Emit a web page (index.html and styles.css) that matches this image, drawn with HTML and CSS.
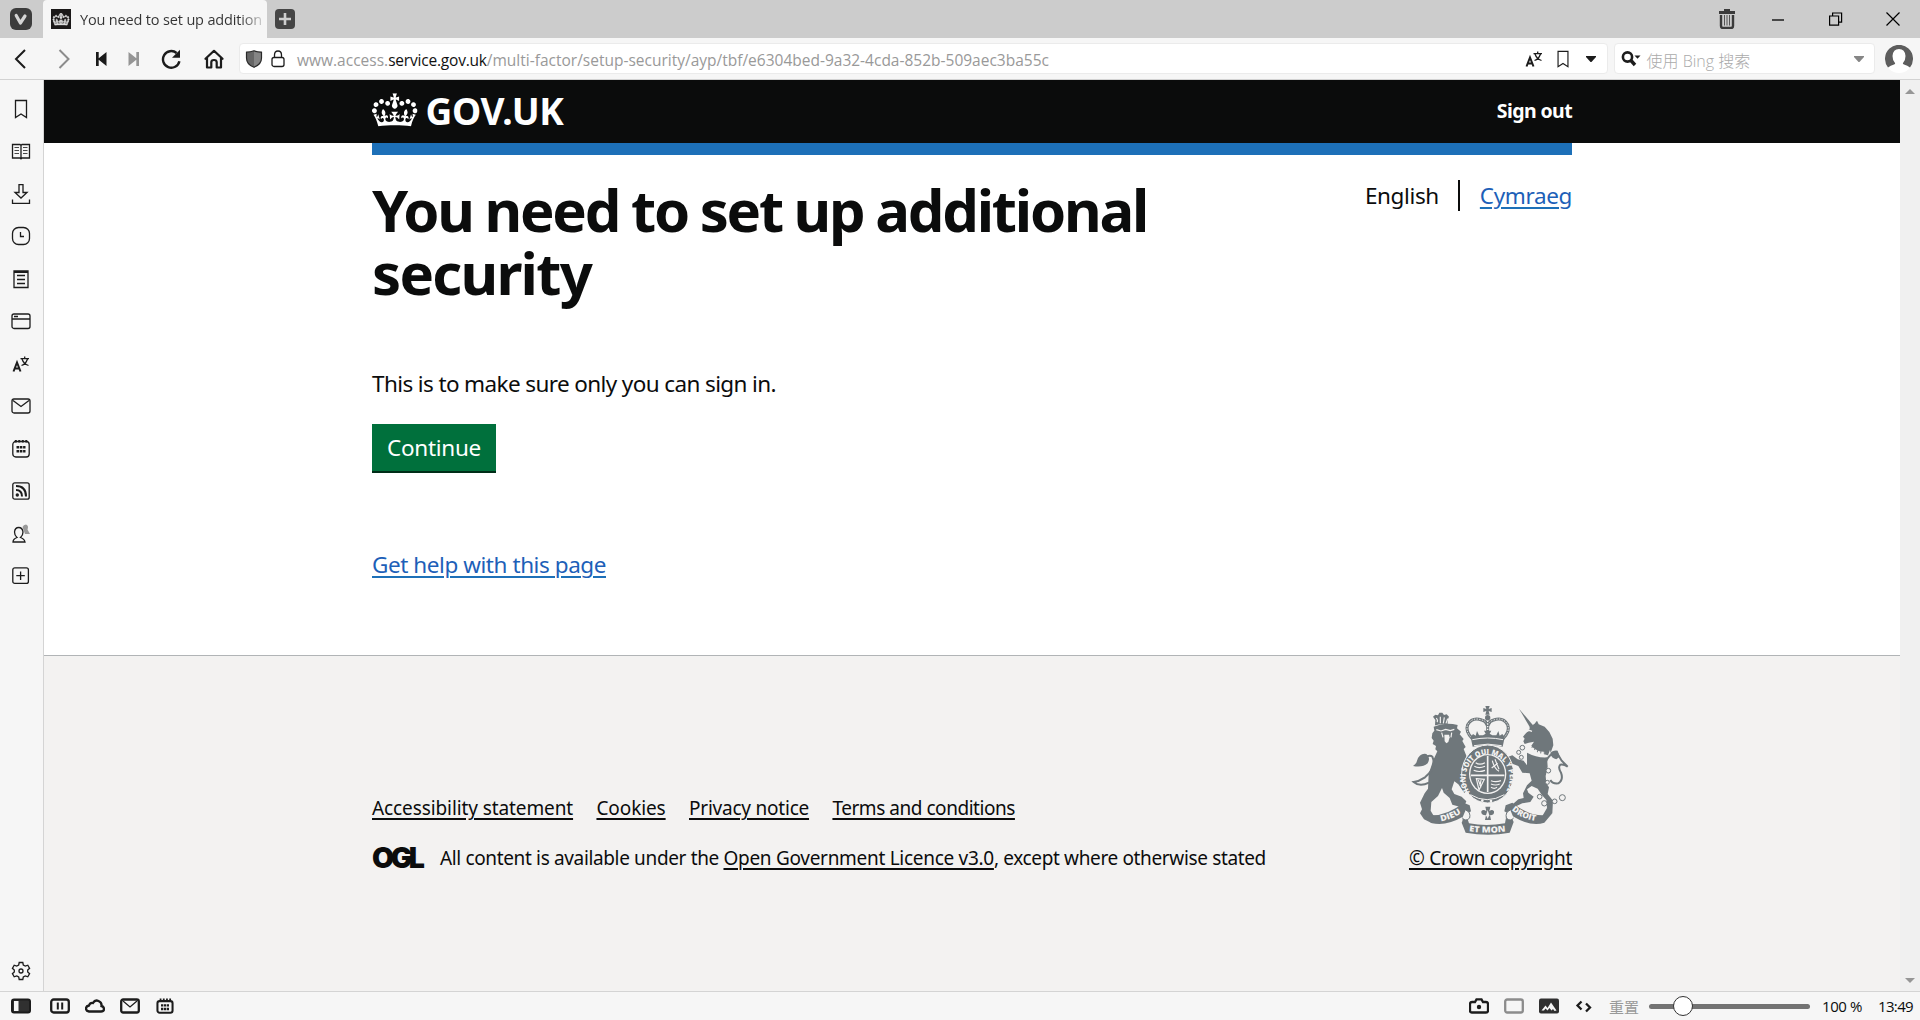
FILE: index.html
```html
<!DOCTYPE html>
<html lang="en">
<head>
<meta charset="utf-8">
<title>You need to set up additional security</title>
<link rel="stylesheet" href="styles.css">
</head>
<body>
<svg class="defs" width="0" height="0" aria-hidden="true">
  <symbol id="crown" viewBox="0 0 132 97"><path d="M25 30.2c3.500 1.500 7.700-.2 9.100-3.700 1.500-3.600-.2-7.800-3.900-9.200-3.600-1.400-7.600.3-9.100 3.900-1.400 3.500.3 7.500 3.900 9zM9 39.500c3.600 1.500 7.800-.2 9.200-3.700 1.500-3.600-.2-7.800-3.900-9.100-3.600-1.500-7.600.2-9.100 3.800-1.400 3.500.3 7.500 3.800 9zM4.400 57.200c3.500 1.500 7.700-.2 9.100-3.800 1.500-3.600-.2-7.700-3.900-9.100-3.500-1.500-7.600.3-9.100 3.800-1.400 3.500.3 7.600 3.900 9.100zm38.300-21.400c3.500 1.500 7.700-.2 9.100-3.800 1.500-3.600-.2-7.700-3.900-9.100-3.600-1.500-7.600.3-9.100 3.800-1.300 3.600.4 7.700 3.900 9.100zm64.400-5.600c-3.600 1.500-7.800-.2-9.100-3.700-1.500-3.600.2-7.800 3.800-9.200 3.600-1.400 7.700.3 9.200 3.900 1.300 3.500-.4 7.500-3.900 9zm15.900 9.300c-3.600 1.500-7.700-.2-9.100-3.700-1.500-3.600.2-7.800 3.700-9.100 3.600-1.500 7.700.2 9.200 3.800 1.500 3.500-.3 7.500-3.800 9zm4.700 17.700c-3.600 1.500-7.800-.2-9.200-3.800-1.500-3.600.2-7.700 3.900-9.100 3.600-1.500 7.700.3 9.200 3.800 1.300 3.500-.4 7.600-3.900 9.100zM89.300 35.800c-3.600 1.500-7.800-.2-9.200-3.800-1.400-3.600.2-7.700 3.900-9.100 3.600-1.500 7.700.3 9.200 3.800 1.400 3.600-.3 7.700-3.900 9.100zM69.700 17.700l8.900 4.700V9.300l-8.900 2.800c-.2-.3-.5-.6-.9-.9L72.400 0H59.600l3.500 11.200c-.3.3-.6.5-.9.9l-8.800-2.800v13.100l8.800-4.700c.3.3.6.7.9.9l-5 15.400v.1c-.2.8-.4 1.600-.4 2.400 0 4.100 3.100 7.500 7 8.100h.2c.3 0 .7.1 1 .1.4 0 .7 0 1-.1h.2c4-.6 7.100-4.100 7.100-8.100 0-.8-.1-1.700-.4-2.400V34l-5.100-15.400c.4-.2.7-.6 1-.9zM66 92.800c16.900 0 32.800 1.100 47.100 3.200 4-16.900 8.900-26.700 14-33.500l-9.600-3.400c1 4.900 1.100 7.200 0 10.200-1.500-1.400-3-4.300-4.200-8.700L108.600 76c2.800-2 5-3.200 7.500-3.300-4.400 9.400-10 11.900-13.600 11.200-4.300-.8-6.300-4.600-5.600-7.900 1-4.700 5.700-5.900 8-.5 4.300-8.700-3-11.400-7.600-8.800 7.100-7.200 7.900-13.500 2.100-21.100-8 6.100-8.100 12.300-4.500 20.800-4.700-5.400-12.100-2.500-9.500 6.200 3.400-5.200 7.900-2 7.200 3.100-.6 4.300-6.400 7.800-13.500 7.200-10.300-.9-10.900-8-11.200-13.800 2.500-.5 7.100 1.800 11 7.300L80.200 60c-4.100 4.400-8 5.300-12.300 5.400 1.400-4.400 8-11.600 8-11.600H55.500s6.400 7.200 7.900 11.600c-4.200-.1-8-1-12.300-5.400l1.400 16.400c3.900-5.500 8.500-7.700 10.900-7.300-.3 5.800-.9 12.800-11.100 13.800-7.200.6-12.900-2.900-13.500-7.200-.7-5 3.800-8.300 7.100-3.100 2.700-8.700-4.600-11.600-9.400-6.200 3.700-8.500 3.600-14.700-4.600-20.800-5.800 7.600-5 13.900 2.200 21.100-4.700-2.600-11.900.1-7.700 8.800 2.300-5.500 7.100-4.200 8.100.5.700 3.300-1.300 7.100-5.700 7.900-3.500.7-9-1.800-13.500-11.200 2.500.1 4.700 1.300 7.500 3.300l-4.700-15.400c-1.200 4.400-2.700 7.200-4.300 8.700-1.100-3-.9-5.300 0-10.200l-9.500 3.400c5 6.900 9.900 16.700 14 33.500 14.800-2.100 30.800-3.200 47.700-3.200z"/></symbol>
  <symbol id="bookmark" viewBox="0 0 20 20"><path d="M4.500 1.500h11v17L10 15l-5.500 3.500z" class="line"/></symbol>
  <symbol id="translate" viewBox="0 0 20 20"><path d="M2.500 17.500L6 8.500l3.500 9M3.800 14.500h4.400" class="line heavy"/><path d="M9.500 4.700h8.500M13.700 2.500v2M11 5c1 3 3.500 5.500 6.500 6.500M16.500 5c-1 3-3 5.500-6 6.500" class="line"/></symbol>
  <symbol id="mail" viewBox="0 0 20 20"><rect x="1" y="3" width="18" height="14" rx="2" class="line"/><path d="M2 4.500l8 6 8-6" class="line"/></symbol>
  <symbol id="calendar" viewBox="0 0 20 20"><rect x="1.800" y="2.500" width="16.400" height="15.500" rx="3" class="line"/><path d="M3.800 2.300h13" stroke="#1c1c1c" stroke-width="2.400" stroke-dasharray="2 1.500"/><path d="M5.500 8.300h9M5.500 12.300h9" stroke="#1c1c1c" stroke-width="2.600" stroke-dasharray="2.600 .7"/></symbol>
</svg>

<header class="tabbar">
  <div class="menu-slot"><svg class="ic22" viewBox="0 0 22 22"><rect width="22" height="22" rx="6" fill="#3c3c3c"/><path d="M6.200 7.500L10.400 15l4.600-7" fill="none" stroke="#d4d4d4" stroke-width="3.200" stroke-linecap="round" stroke-linejoin="round"/></svg></div>
  <div class="tab">
    <svg class="ic20" viewBox="0 0 20 20"><rect width="20" height="20" fill="#1b1919"/><use href="#crown" x="1.500" y="4" width="17" height="12.500" fill="#e2e2e2" stroke="#d6d6d6" stroke-width="5"/></svg>
    <span class="tab-title">You need to set up addition</span>
  </div>
  <svg class="newtab ic20" viewBox="0 0 20 20"><rect width="20" height="20" rx="4" fill="#454545"/><path d="M10 4v12M4 10h12" stroke="#cecece" stroke-width="2.600"/></svg>
  <div class="window-controls">
    <svg class="ic20 trash" viewBox="0 0 20 20"><path d="M2 3.500h16M7 1.500h6" stroke="#3b3b3b" stroke-width="2.800" fill="none"/><path d="M4 6v11q0 2 2 2h8q2 0 2-2V6" fill="none" stroke="#3b3b3b" stroke-width="2.400"/><path d="M7.500 6v10.500M10 6v10.500M12.500 6v10.500" stroke="#555" stroke-width="1"/></svg>
    <svg class="ic14" viewBox="0 0 14 14"><path d="M1 8h12" stroke="#000" stroke-width="1.300"/></svg>
    <svg class="ic14" viewBox="0 0 14 14"><path d="M.6 4h9v9.200h-9zM3.600 4V1h9v9.200h-3" fill="none" stroke="#000" stroke-width="1.200"/></svg>
    <svg class="ic14" viewBox="0 0 14 14"><path d="M.5.500l13 13m0-13l-13 13" stroke="#000" stroke-width="1.200"/></svg>
  </div>
</header>

<nav class="toolbar">
  <div class="nav-icons">
    <svg viewBox="0 0 20 20"><path d="M14 1L5 10l9 9" class="line heavy"/></svg>
    <svg viewBox="0 0 20 20"><path d="M5.500 1l9 9-9 9" class="line heavy grey"/></svg>
    <svg viewBox="0 0 20 20"><path d="M5 3v14h2.700v-6.200l7.800 6.200V3L7.700 9.200V3z" fill="#1a1a1a"/></svg>
    <svg viewBox="0 0 20 20"><path d="M15 3v14h-2.700v-6.200L4.500 17V3l7.800 6.200V3z" fill="#959595"/></svg>
    <svg viewBox="0 0 20 20"><path d="M18.400 12.200A8.300 8.300 0 1 1 15.600 4" fill="none" stroke="#1c1c1c" stroke-width="2.400"/><path d="M19 .8v8h-8z" fill="#1c1c1c"/></svg>
    <svg viewBox="0 0 20 20"><path d="M1.500 9.800L10 1.800l8.500 8M3 9v9.500h4.300v-5.200q0-2.300 2.700-2.300t2.700 2.300v5.200H17V9" fill="none" stroke="#1c1c1c" stroke-width="2.200" stroke-linejoin="round" stroke-linecap="round"/></svg>
  </div>
  <div class="address">
    <svg class="shield" viewBox="0 0 18 18"><path d="M1.500 2.200Q5.500 2 9 .8q3.500 1.200 7.500 1.400V8q0 6.500-7.500 9.300Q1.500 14.500 1.500 8z" fill="#666" stroke="#292929" stroke-width="1.200"/><path d="M9 1.800v14.500Q15.500 13.500 15.700 8V3Q12 2.800 9 1.800z" fill="#858585"/></svg>
    <svg class="lock" viewBox="0 0 14 18"><rect x="1" y="7.500" width="12" height="9" rx="2" class="line"/><path d="M3.500 7.500V5q0-4 3.500-4t3.500 4v2.500" class="line"/></svg>
    <span class="url">www.access.<b>service.gov.uk</b>/multi-factor/setup-security/ayp/tbf/e6304bed-9a32-4cda-852b-509aec3ba55c</span>
    <svg class="address-translate" viewBox="0 0 20 20"><use href="#translate"/></svg>
    <svg class="address-bookmark" viewBox="0 0 20 20"><use href="#bookmark"/></svg>
    <svg class="caret" viewBox="0 0 10 6"><path d="M0 0h10v1L5 6.500 0 1z" fill="#1c1c1c"/></svg>
  </div>
  <div class="search">
    <svg class="glass" viewBox="0 0 20 16"><circle cx="6.500" cy="6" r="4.600" fill="none" stroke="#1c1c1c" stroke-width="2.600"/><path d="M9.500 9l4.500 5" stroke="#1c1c1c" stroke-width="3.400"/><path d="M13.500 4.500h6l-3 3.300z" fill="#1c1c1c"/></svg>
    <span class="placeholder">使用 Bing 搜索</span>
    <svg class="caret" viewBox="0 0 10 6"><path d="M0 0h10v1L5 6.500 0 1z" fill="#868686"/></svg>
  </div>
  <svg class="avatar" viewBox="0 0 28 28"><circle cx="14" cy="14" r="14" fill="#fff"/><path d="M3 22.500a14 14 0 1 1 22 0q-2.500-2.200-6-3-1.500-.6-1-1.500Q20.500 15.500 20.500 11q-.5-7-6.500-7t-6.500 7q0 4.500 2.500 7 .5.900-1 1.500-3.500.8-6 3z" fill="#5d5d5d"/></svg>
</nav>

<div class="main">
  <aside class="sidebar">
    <div class="panels">
      <svg viewBox="0 0 20 20"><use href="#bookmark"/></svg>
      <svg viewBox="0 0 20 20"><path d="M1.500 3.500H9l1 .8 1-.8h7.500V17H11l-1 .8-1-.8H1.500zM10 4.500v13" class="line"/><path d="M3.500 6.500H8M3.500 9.500H8M3.500 12.500H8M12 6.500h4.500M12 9.500h4.500M12 12.500h4.500" class="line thin"/></svg>
      <svg viewBox="0 0 20 20"><path d="M1.500 15.500v4h17v-4M8 .5h4v8h4l-6 5.500-6-5.500h4z" class="line"/></svg>
      <svg viewBox="0 0 20 20"><rect x="1.500" y="1.500" width="17" height="17" rx="6" class="line"/><path d="M9.500 6v4.500H13" class="line"/></svg>
      <svg viewBox="0 0 20 20"><path d="M3 2h14v16.500H3z" class="line"/><path d="M3 3h14" class="line heavy"/><path d="M6 6.500h8M6 10.500h8M6 14.500h8" class="line"/></svg>
      <svg viewBox="0 0 20 20"><rect x="1" y="3" width="18" height="14.500" rx="2" class="line"/><path d="M1 8h18M3 5.500h4" class="line"/></svg>
      <svg viewBox="0 0 20 20"><use href="#translate"/></svg>
      <svg viewBox="0 0 20 20"><use href="#mail"/></svg>
      <svg viewBox="0 0 20 20"><use href="#calendar"/></svg>
      <svg viewBox="0 0 20 20"><rect x="1.800" y="1.800" width="16.400" height="16.400" rx="2" class="line"/><circle cx="6.300" cy="14" r="1.700" fill="#1c1c1c"/><path d="M5 9q6 0 6 6.500M5 5q10 0 10 10.500" class="line heavy"/></svg>
      <svg viewBox="0 0 20 20"><path d="M11.500 3q1-2.500 3.500-2.500 3 1 1.500 5l2.500 4.500h-5z" fill="#999"/><path d="M2 18q0-3 4-4.500Q3.500 11.500 3.500 8q.5-4.500 4.200-4.500T12 8q0 3.500-2.500 5.500 4 1.500 4.500 4.500z" class="line"/></svg>
      <svg viewBox="0 0 20 20"><rect x="1.800" y="1.800" width="15.600" height="15.600" rx="2" class="line"/><path d="M9.600 5.500v8.500M5.300 9.700h8.500" class="line"/></svg>
    </div>
    <svg viewBox="0 0 20 20"><path d="M8.200 1.500h3.600l.5 2.500 2 1.100 2.500-.9 1.800 3.100-1.900 1.700v2l1.900 1.700-1.800 3.100-2.500-.9-2 1.100-.5 2.500H8.200L7.700 16l-2-1.100-2.500.9-1.800-3.100L3.300 11V9L1.400 7.300l1.800-3.100 2.500.9 2-1.100z" class="line"/><circle cx="10" cy="10" r="2" class="line"/></svg>
  </aside>

  <div class="page">
    <div class="gov-header"><div class="wrap gov-header-row">
      <a class="logo"><svg class="logo-crown" viewBox="0 0 132 97"><use href="#crown" fill="#fff"/></svg><span>GOV.UK</span></a>
      <a class="signout">Sign out</a>
    </div></div>
    <main class="wrap content">
      <div class="blue-bar"></div>
      <div class="top-row">
        <h1>You need to set up additional<br><span class="second-line">security</span></h1>
        <div class="langs"><span class="lang-current">English</span><a class="link">Cymraeg</a></div>
      </div>
      <p class="lead">This is to make sure only you can sign in.</p>
      <button class="button">Continue</button>
      <p class="help"><a class="link">Get help with this page</a></p>
    </main>
    <footer class="gov-footer"><div class="wrap footer-row">
      <div class="footer-meta">
        <ul class="footer-links">
          <li><a class="t1">Accessibility statement</a></li><li><a class="t1">Cookies</a></li><li><a class="t2">Privacy notice</a></li><li><a class="t3">Terms and conditions</a></li>
        </ul>
        <div class="licence"><span class="ogl">OGL</span><span class="licence-text">All content is available under the <a>Open Government Licence v3.0</a>, except where otherwise stated</span></div>
      </div>
      <div class="copyright">
        <svg class="crest" viewBox="0 0 510 420">
          <defs>
            <path id="garter" d="M195 277A66 71 0 1 1 301 277"/>
            <path id="dieu" d="M108 364Q145 357 174 336"/>
            <path id="droit" d="M320 330Q350 358 398 364"/>
            <path id="etmon" d="M192 394Q248 402 308 394"/>
          </defs>
          <g fill="#6f777b">
            <!-- lion -->
            <path d="M90 76L91 60 84 50l7-6 8 2 4-8 9 0 5 7 8-2 7 7-4 9 0 17q-20-6-35 0z"/>
            <path d="M86 80q34-14 72-5l-2 10 12 10-4 8 12 14-4 6 10 18-6 6 8 20-4 24-9 16 18 42-2 20-9 10-18-26-12-9-8 24 8 14 22 8 14 14-6 14-14 2-22-6-8-20-18-16-5-14-12 24-20 18-2 26 8 14 18 10-4 12-18 2-24-12-12-18 6-12-6-20 14-28 10-14 2-44 14-42 12-26-6-6 2-10-10-6 3-10-6-8 2-14 6-8z"/>
            <path d="M36 182q8-24 28-20 14 10 4 28-16 14-44 8 10-6 12-16z"/>
          </g>
          <path d="M40 194q30-36 42-24 14 32-22 62-18 12-34 14 18 16 46 2" fill="none" stroke="#6f777b" stroke-width="6"/>
          <path d="M94 89l14 4 14-5 14 4 12-4M110 98l4 14M140 98l-2 14M94 54q6 8 2 12M106 50v20M118 52l-3 18M128 56l-5 14" fill="none" stroke="#f3f2f1" stroke-width="3.500"/>
          <path d="M118 104h14l2 8-4 14-6 4-5-6z" fill="#f3f2f1"/>
          <!-- unicorn -->
          <g fill="#6f777b">
            <path d="M342 26l42 50-8 8z"/>
            <path d="M374 80l14-8 8-10 5 11 18 7 14 16 10 20 2 20-8 22-2-8-6 16-30-8-22-18 10-15-16 3-12 4-4-8 4-8-5-6 20-24z"/>
            <path d="M366 158q30 16 60 14l2 28-6 28 2 22 8 12-4 20 16 20-2 38-16 14-14-6 14-24-2-24-14-16-12-18-18-8-14 10 4 10 16 12-10 16-24 4-22 10-6-8 16-14 16-4-2-14 12-24 14-14-6-22-22-2-12-20-26-10-8-16 16-6 16 12 18 4 10 14z"/>
            <path d="M454 178l10-8-6-18q-16-2-22 8 4 16 18 18z"/>
          </g>
          <path d="M372 137q20 25 48 23" fill="none" stroke="#f3f2f1" stroke-width="10" stroke-dasharray="8 3"/>
          <path d="M358 98l14-7 9 3" fill="none" stroke="#f3f2f1" stroke-width="4"/>
          <path d="M422 186q14-32 36-24l12 20 18 18q-12-8-22-6-8 8 2 24 8 22-8 32-18 2-24-10" fill="none" stroke="#6f777b" stroke-width="6"/>
          <g fill="#f3f2f1" stroke="#6f777b" stroke-width="3"><circle cx="352" cy="143" r="7"/><circle cx="341" cy="157" r="6"/><circle cx="349" cy="172" r="6"/><circle cx="430" cy="212" r="7"/><circle cx="427" cy="247" r="6"/><circle cx="404" cy="290" r="7"/><circle cx="418" cy="310" r="8"/><circle cx="449" cy="304" r="7"/><circle cx="472" cy="293" r="9"/></g>
          <!-- royal crown -->
          <path d="M202 116Q180 94 188 74q14-24 42-14 12 2 16 14h4q4-12 16-14 28-10 42 14 8 20-14 42" fill="none" stroke="#6f777b" stroke-width="9"/>
          <path d="M202 116Q180 94 188 74q14-24 42-14 12 2 16 14h4q4-12 16-14 28-10 42 14 8 20-14 42" fill="none" stroke="#f3f2f1" stroke-width="3" stroke-dasharray="4 4"/>
          <path d="M241 18h13l-3 9 9-3v12l-9-3 3 11h-13l3-11-9 3V24l9 3z" fill="#6f777b"/>
          <circle cx="248" cy="53" r="8" fill="#6f777b"/><path d="M248 62v34" stroke="#6f777b" stroke-width="9"/><path d="M248 62v34" stroke="#f3f2f1" stroke-width="4" stroke-dasharray="4 4"/>
          <path d="M197 112l7-10 8 5 4-14 6 13 12 0 8-5-5-9h22l-5 9 8 5h12l6-13 4 14 8-5 7 10-6 28q-44-10-90 0z" fill="#6f777b"/>
          <path d="M202 119q46-10 92 0M207 137q42-9 83 0" fill="none" stroke="#f3f2f1" stroke-width="3"/>
          <!-- garter and shield -->
          <ellipse cx="248" cy="222" rx="78" ry="87" fill="#6f777b" stroke="#f3f2f1" stroke-width="3"/><ellipse cx="248" cy="222" rx="56" ry="60" fill="#f3f2f1"/><ellipse cx="248" cy="222" rx="52" ry="56" fill="#6f777b"/>
          <path d="M248 168v108M198 226h100" stroke="#f3f2f1" stroke-width="5"/>
          <path d="M212 188q12 9 28 0M208 199q14 8 32 0M206 211q16 7 34 0M262 182q6 24 20 32M260 204l18-14M270 178l12 30M214 236l24 2-16 32zM220 240l8 22M228 240l-3 18M258 242q14 6 30 0M258 252q14 6 26 0M258 262q10 6 18 0" fill="none" stroke="#f3f2f1" stroke-width="3.500"/>
          <path d="M196 284q50 30 102 0M194 300q55 24 108 0" fill="none" stroke="#f3f2f1" stroke-width="3"/><g fill="#f3f2f1"><circle cx="232" cy="302" r="4"/><circle cx="258" cy="303" r="4"/></g>
          <text class="motto garter-text"><textPath href="#garter" textLength="300" lengthAdjust="spacingAndGlyphs">HONI SOIT QUI MAL Y PENSE</textPath></text>
          <!-- ribbon -->
          <path d="M52 342q60 16 124-34l18 8 4 18-20 14q-60 34-100 20zM440 342q-56 16-118-34l-20 8-4 18 24 14q56 34 96 20z" fill="#6f777b"/>
          <path d="M170 342q6 16 0 26l12 30q68 12 132 0l12-32-10-22-12 4-4 22q-56 10-108 0l-8-24z" fill="#6f777b"/>
          <path d="M182 330q16 6 12 24-12 12-22 0M316 330q-16 6-12 24 12 12 22 0" fill="#f3f2f1" stroke="#6f777b" stroke-width="3"/>
          <path d="M241 320h15l-3 14q8-8 14 0 2 12-12 12l3 14h-18l3-14q-16 0-14-12 6-8 15 0z" fill="#6f777b"/><path d="M248 330l5 16-5 10-5-10z" fill="#f3f2f1"/>
          <text class="motto"><textPath href="#dieu" textLength="66" lengthAdjust="spacingAndGlyphs">DIEU</textPath></text>
          <text class="motto"><textPath href="#droit" textLength="80" lengthAdjust="spacingAndGlyphs">DROIT</textPath></text>
          <text class="motto"><textPath href="#etmon" textLength="110" lengthAdjust="spacingAndGlyphs">ET MON</textPath></text>
        </svg>
        <a>© Crown copyright</a>
      </div>
    </div></footer>
  </div>
  <div class="scrollbar"><i class="up"></i><i class="down"></i></div>
</div>

<div class="statusbar">
  <div class="status-icons">
    <svg viewBox="0 0 20 16"><rect x="1" y="1.500" width="18" height="13" rx="2" fill="#303030" stroke="#1c1c1c" stroke-width="2"/><path d="M3 3h4.500v10H3z" fill="#f6f6f6"/></svg>
    <svg class="tiling" viewBox="0 0 20 16"><rect x="1.200" y="1.500" width="17.600" height="13" rx="2.500" class="line bold"/><path d="M7.800 4.500v7M12.200 4.500v7" class="line heavy"/></svg>
    <svg viewBox="0 0 20 16"><path d="M4 13.500q-3-.5-3-3t3-3q1-3 4-2.500 2-3.500 5.500-2t3 5q2.500.5 2.500 3t-3 2.500z" class="line bold"/></svg>
    <svg viewBox="0 0 20 16"><rect x="1.200" y="1.500" width="17.600" height="13" rx="2" class="line bold"/><path d="M3 3l7 6 7-6" class="line"/></svg>
    <svg viewBox="0 0 20 18"><rect x="1.500" y="3.500" width="17" height="13" rx="2.500" class="line bold"/><path d="M4 2h13" stroke="#1c1c1c" stroke-width="3" stroke-dasharray="2 1.600"/><path d="M5.500 8.300h9M5.500 12.500h9" stroke="#1c1c1c" stroke-width="2.800" stroke-dasharray="2.600 .7"/></svg>
  </div>
  <div class="status-right">
    <svg viewBox="0 0 20 16"><path d="M3 4h3l1.500-2.600h5L14 4h3q2 0 2 2v6.500q0 2-2 2H3q-2 0-2-2V6q0-2 2-2z" class="line bold"/><circle cx="10" cy="9" r="2.200" fill="#1c1c1c"/></svg>
    <svg viewBox="0 0 20 16"><rect x="1.200" y="1.500" width="17.600" height="13" rx="2" class="line bold grey"/></svg>
    <svg viewBox="0 0 20 16"><rect y=".5" width="20" height="15" rx="2" fill="#303030"/><path d="M2.500 12.500l4-5 2 2.500 3.500-5.500 5.500 8-2 .5-1.500-2-1.500 1.500-2-2.500-2 2.500-2-2-1.500 2z" fill="#f6f6f6"/></svg>
    <svg viewBox="0 0 20 16"><path d="M7.500 3.500L3.500 7.500l4 4M12 5.500l4 4-4 4" class="line bold"/></svg>
    <span class="zoom-reset">重置</span>
    <div class="slider"><i></i></div>
    <span class="pct">100 %</span><span class="clock">13:49</span>
  </div>
</div>
</body>
</html>
```
FILE: styles.css
```css
*{box-sizing:border-box}
body{margin:0;width:1920px;height:1020px;overflow:hidden;display:flex;flex-direction:column;background:#f6f6f6;font-family:"Open Sans","Noto Sans CJK SC",sans-serif;color:#0b0c0c;white-space:nowrap}
svg{display:block;flex:none}
.defs{position:absolute}

/* icon strokes */
.line{fill:none;stroke:#1c1c1c;stroke-width:1.300}
.heavy{stroke-width:2}
.bold{stroke-width:2.300}
.thin{stroke-width:.8}
.grey{stroke:#8c8c8c}
.ic20{width:20px;height:20px}
.ic22{width:22px;height:22px}
.ic14{width:14px;height:14px}

/* tab bar */
.tabbar{height:38px;flex:none;background:#ccc;display:flex;align-items:center}
.menu-slot{width:43px;padding-left:10px}
.tab{width:224px;height:38px;background:#f6f6f6;border-radius:4px 4px 0 0;display:flex;align-items:center;padding-left:8px;gap:9px}
.tab-title{font-size:14.500px;letter-spacing:-.16px;color:transparent;background:linear-gradient(90deg,#333 88%,#ccc 100%);background-clip:text;-webkit-background-clip:text}
.newtab{margin-left:8px}
.window-controls{margin-left:auto;display:flex;align-items:center;padding-right:20px;gap:43.500px}
.trash{margin-right:-9.500px}

/* navigation bar */
.toolbar{height:42px;flex:none;border-bottom:1px solid #d2d2d2;display:flex;align-items:center}
.nav-icons{display:grid;grid-template-columns:42px 44px 30px 36px 38px 48.500px;justify-items:center}
.nav-icons svg{width:20px;height:20px}
.address,.search{height:31px;background:#fff;display:flex;align-items:center;border:1px solid #ebebeb;border-radius:4px}
.address{width:1369px;padding:0 10.500px 0 5.500px}
.shield{width:18px;height:18px}
.lock{width:14px;height:18px;margin-left:8px}
.url{margin:2px 0 0 12px;font-size:15.500px;color:#999}
.url b{font-weight:400;color:#111;letter-spacing:-.2px}
.address-translate{width:20px;height:20px;margin-left:auto}
.address-bookmark{width:18px;height:18px;margin:0 14px 0 10px}
.caret{width:10px;height:6px}
.search{width:261px;margin-left:6px;padding:0 9.500px 0 6px}
.glass{width:20px;height:16px}
.placeholder{font-size:16px;font-weight:300;color:#aaa;margin:2px 0 0 6px}
.search .caret{margin-left:auto}
.avatar{width:28px;height:28px;margin-left:10.500px}

/* side panel */
.main{display:flex;height:911px;flex:none}
.sidebar{width:44px;border-right:1px solid #d4d4d4;display:flex;flex-direction:column;justify-content:space-between;padding:7.500px 0 10px 11px}
.panels{display:grid;grid-auto-rows:42.500px;align-items:center}
.sidebar svg{width:20px;height:20px}

/* page */
.page{width:1856px;background:#fff;font-family:"Noto Sans",sans-serif;display:flex;flex-direction:column}
.wrap{width:1200px;margin-left:328px}
.gov-header{height:63px;background:#0b0c0c;color:#fff}
.gov-header-row{display:flex;justify-content:space-between;height:61px;align-items:center}
.logo{display:flex;align-items:center;gap:8px;font-weight:700;font-size:37px;line-height:40px;letter-spacing:-.35px}
.logo-crown{width:45.500px;height:34px;margin-top:-1px}
.signout{font-weight:700;font-size:19.500px;letter-spacing:-.6px}
.content{height:512px}
.blue-bar{height:12px;background:#1d70b8}
.top-row{display:flex;justify-content:space-between;padding-top:23px}
h1{font-size:58px;line-height:63px;margin:0;letter-spacing:-2.200px;word-spacing:-1.200px}
.second-line{letter-spacing:-1.740px}
.langs{display:flex;height:31px;line-height:31px;margin-top:2px;letter-spacing:-.37px}
.lang-current{border-right:2px solid #0b0c0c;padding-right:19px;margin-right:20px}
.lead,.help,.langs,.button{font-size:22.500px;line-height:31px}
.lead{margin:64px 0 0;letter-spacing:-.613px}
.button{display:block;width:124px;height:47px;margin:25px 0 0;padding:0;border:0;background:#00703c;color:#fff;font-family:inherit;letter-spacing:-.270px;box-shadow:0 2px 0 #002d18}
.help{margin:78px 0 0;letter-spacing:-.433px}
a{text-decoration-thickness:2px;text-underline-offset:3px}
.link{color:#1d5fb8;text-decoration-line:underline;text-decoration-color:#1d70b8}

/* footer */
.gov-footer{flex:1;background:#f3f2f1;border-top:1px solid #b1b4b6;font-size:19px;line-height:25px}
.footer-row{display:flex;justify-content:space-between;align-items:flex-end;height:215px}
.footer-links{display:flex;gap:23.400px;margin:0 0 25px;padding:0;list-style:none}
.footer-links a,.licence a,.copyright a{text-decoration-line:underline}
.t1{letter-spacing:-.100px}
.t2{letter-spacing:-.224px}
.t3{letter-spacing:-.459px}
.licence{display:flex;gap:17px}
.ogl{width:51px;font:900 28.500px/24px Inter,sans-serif;letter-spacing:-3.400px}
.licence-text{letter-spacing:-.355px}
.licence-text a{letter-spacing:-.290px}
.copyright{display:flex;flex-direction:column;align-items:flex-end;letter-spacing:-.270px}
.crest{width:170px;height:140px;margin:0 -3px 6px 0}
.motto{font:800 25px "Open Sans",sans-serif;fill:#f3f2f1;letter-spacing:0}
.garter-text{font-size:23px}

/* scrollbar */
.scrollbar{width:20px;background:#f0f0f0;display:flex;flex-direction:column;justify-content:space-between;align-items:center;padding:9px 0 8px}
.up,.down{border:5px solid transparent}
.up{border-top:0;border-bottom-color:#969696}
.down{border-bottom:0;border-top-color:#969696}

/* status bar */
.statusbar{flex:1;border-top:1px solid #d4d4d4;display:flex;justify-content:space-between;align-items:center;padding:0 8px 0 11px;font-size:15px}
.status-icons,.status-right{display:flex;align-items:center;gap:15px}
.statusbar svg{width:20px;height:16px}
.tiling{margin-left:4px}
.zoom-reset{color:#999}
.slider{width:161px;height:5px;border-radius:3px;background:#737373;margin-left:-5px;display:flex;align-items:center;padding-left:23.500px}
.slider i{width:20px;height:20px;border:1px solid #333;border-radius:50%;background:#fff}
.pct{width:40px;letter-spacing:-.400px;margin-left:-3px}
.clock{width:34px;letter-spacing:-.650px;margin-left:1px}
```
